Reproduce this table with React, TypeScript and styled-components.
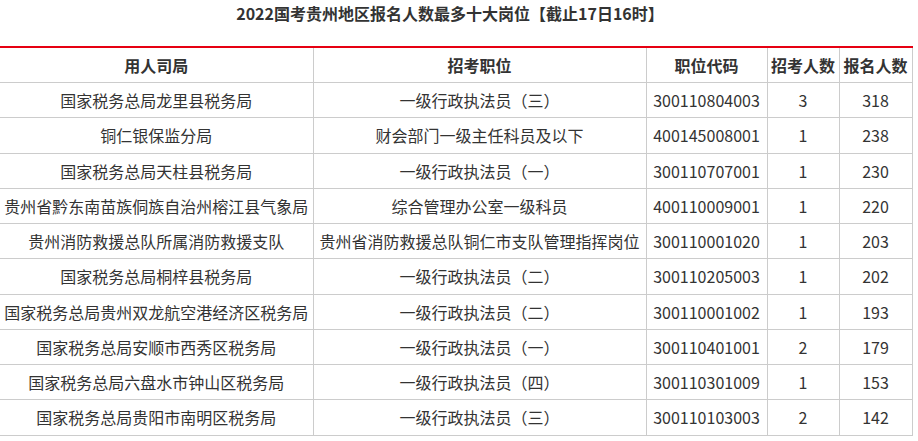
import { FC } from 'react';
import styled, { createGlobalStyle } from 'styled-components';

const GlobalStyle = createGlobalStyle`
    body {
        margin: 0;
        background: #ffffff;
        font-family: "Noto Sans CJK SC", "Microsoft YaHei", sans-serif;
        color: #333333;
    }
`;

const Page = styled.div`
    width: 912px;
`;

const Title = styled.h1`
    width: 900px;
    margin: 0;
    padding-top: 2px;
    height: 46px;
    box-sizing: border-box;

    font-size: 16px;
    line-height: 22px;
    font-weight: 700;
    text-align: center;
    color: #333333;
`;

const Table = styled.table`
    width: 912px;
    border-collapse: collapse;
    table-layout: fixed;
    border-top: 2px solid #e60012;
`;

const HeadCell = styled.th`
    height: 34px;
    padding: 0;
    border: 1px solid #cccccc;
    border-top: 0;

    font-size: 16px;
    font-weight: 700;
    line-height: 20px;
    text-align: center;
    color: #333333;

    &:first-child {
        border-left: 0;
    }
`;

const Cell = styled.td`
    height: 34.25px;
    padding: 0;
    border: 1px solid #cccccc;

    font-size: 16px;
    line-height: 20px;
    text-align: center;
    white-space: nowrap;
    color: #333333;

    &:first-child {
        border-left: 0;
    }
`;

// ----------------------------------------------------------------------------

const columns = [
    { title: '用人司局', width: 313 },
    { title: '招考职位', width: 333 },
    { title: '职位代码', width: 121 },
    { title: '招考人数', width: 72 },
    { title: '报名人数', width: 73 },
];

const rows: [string, string, string, number, number][] = [
    ['国家税务总局龙里县税务局', '一级行政执法员（三）', '300110804003', 3, 318],
    ['铜仁银保监分局', '财会部门一级主任科员及以下', '400145008001', 1, 238],
    ['国家税务总局天柱县税务局', '一级行政执法员（一）', '300110707001', 1, 230],
    ['贵州省黔东南苗族侗族自治州榕江县气象局', '综合管理办公室一级科员', '400110009001', 1, 220],
    ['贵州消防救援总队所属消防救援支队', '贵州省消防救援总队铜仁市支队管理指挥岗位', '300110001020', 1, 203],
    ['国家税务总局桐梓县税务局', '一级行政执法员（二）', '300110205003', 1, 202],
    ['国家税务总局贵州双龙航空港经济区税务局', '一级行政执法员（二）', '300110001002', 1, 193],
    ['国家税务总局安顺市西秀区税务局', '一级行政执法员（一）', '300110401001', 2, 179],
    ['国家税务总局六盘水市钟山区税务局', '一级行政执法员（四）', '300110301009', 1, 153],
    ['国家税务总局贵阳市南明区税务局', '一级行政执法员（三）', '300110103003', 2, 142],
];

const App: FC = () => {
    return (
        <Page>
            <GlobalStyle />
            <Title>2022国考贵州地区报名人数最多十大岗位【截止17日16时】</Title>
            <Table>
                <colgroup>
                    {columns.map((column) => (
                        <col key={column.title} style={{ width: column.width }} />
                    ))}
                </colgroup>
                <thead>
                    <tr>
                        {columns.map((column) => (
                            <HeadCell key={column.title}>{column.title}</HeadCell>
                        ))}
                    </tr>
                </thead>
                <tbody>
                    {rows.map((row) => (
                        <tr key={row[2]}>
                            {row.map((value, index) => (
                                <Cell key={index}>{value}</Cell>
                            ))}
                        </tr>
                    ))}
                </tbody>
            </Table>
        </Page>
    );
};

export default App;
